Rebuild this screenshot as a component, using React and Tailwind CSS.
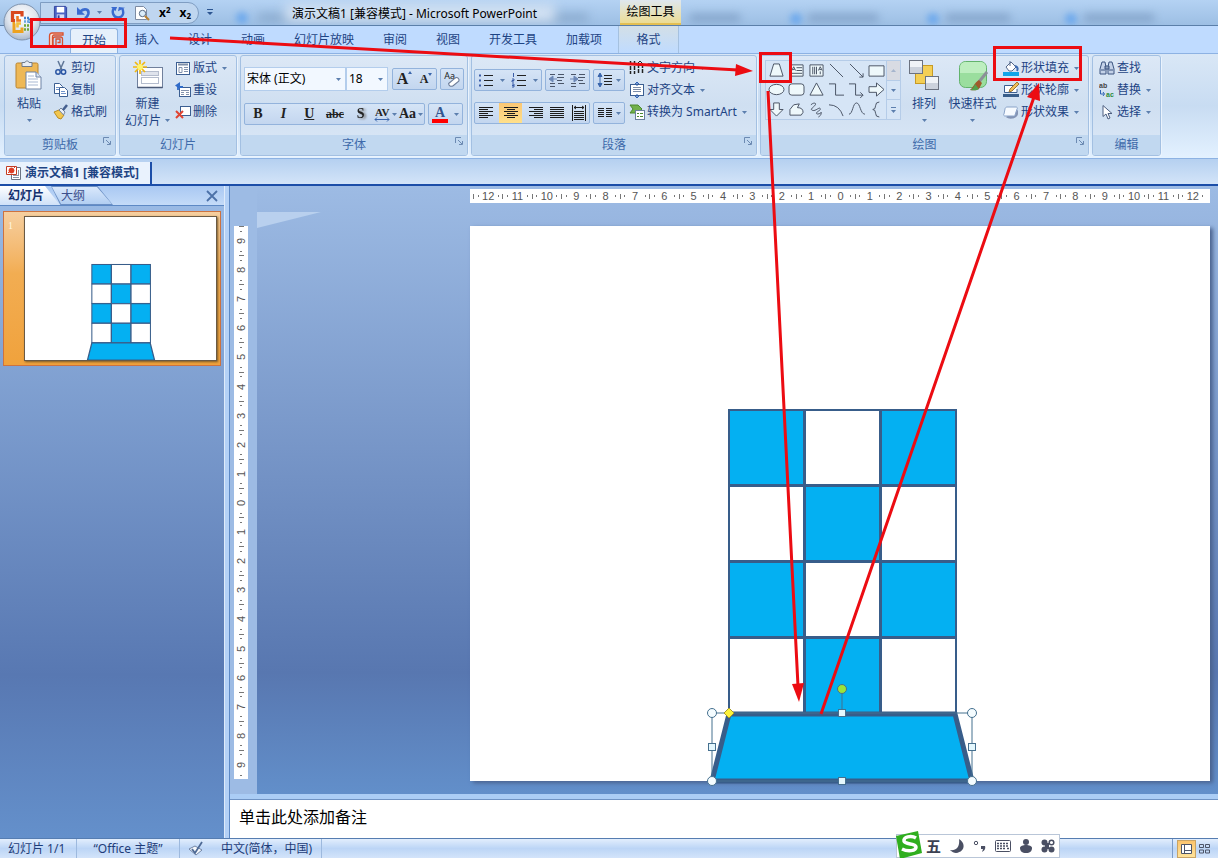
import React, { useState } from 'react';

// Small drop-down triangle used all over the ribbon
const Caret = ({ className = '' }) => (
  <svg className={`w-[5px] h-[3px] flex-shrink-0 ${className}`} viewBox="0 0 5 3" fill="#5c7fae">
    <path d="M0 0h5L2.5 3z" />
  </svg>
);

const Icon = ({ children, className = 'w-4 h-4' }) => (
  <svg className={`flex-shrink-0 ${className}`} viewBox="0 0 16 16" fill="none" stroke="#3c5f92" strokeWidth="1">
    {children}
  </svg>
);

// Orb with the four coloured squares
const OfficeOrb = () => (
  <svg className="w-10 h-10" viewBox="0 0 40 40">
    <defs>
      <radialGradient id="orb" cx="50%" cy="35%" r="65%">
        <stop offset="0" stopColor="#ffffff" />
        <stop offset="0.6" stopColor="#dfe5ee" />
        <stop offset="1" stopColor="#a9b8cc" />
      </radialGradient>
    </defs>
    <circle cx="20" cy="20" r="18" fill="url(#orb)" stroke="#7f93ad" />
    <g fill="none" strokeWidth="2.6">
      <path d="M13 18.500h-2.500v-8H20v4" stroke="#d8481e" strokeWidth="3.200" />
      <path d="M13 21.500h-1v8h8v-4" stroke="#eda21f" strokeWidth="3" />
      <path d="M15.500 14v4.500H19" stroke="#ee7a22" />
      <path d="M22 16h5.500v5" stroke="#3f83cf" strokeDasharray="2 1" />
      <path d="M22 19.500h5" stroke="#6aa5e2" strokeDasharray="2 1" />
      <path d="M22 23.500h5.500M22 27.500h5.500" stroke="#6da83a" strokeDasharray="2 1" />
      <path d="M15.500 25.500V21.500H19" stroke="#f4bf3a" />
    </g>
  </svg>
);

const PptLogo = () => (
  <svg className="w-4 h-4" viewBox="0 0 16 16" fill="none" stroke="#d9502f" strokeWidth="1.3">
    <path d="M4 1h11v2H6c-1 0-1.500 1-1.500 2v9H1.500V4C1.500 2 2.500 1 4 1z" fill="#fbe3da" />
    <rect x="5" y="5" width="9.500" height="9.500" rx="2" />
    <path d="M8 13V7h4v3.500H9.500" />
  </svg>
);

const DocIcon = () => (
  <svg className="w-4 h-4 flex-shrink-0" viewBox="0 0 16 16" fill="#fff" stroke="#6b7484">
    <path d="M5.500 2.500h9v12h-9z" />
    <path d="M7 12.500h6M7 10.500h6M12.500 5v5" stroke="#8a94a5" />
    <path d="M.5 1.500h10v8H.5z" stroke="#c33c22" />
    <circle cx="5.500" cy="5.500" r="2.500" fill="#dd3a22" stroke="#dd3a22" />
    <path d="M2 8l2-2M8 3l1-1" stroke="#dd3a22" />
  </svg>
);

const SaveIcon = () => (
  <Icon className="w-[15px] h-[15px]">
    <path d="M1.500 1.500h12l1 1v12h-13z" fill="#4a63c4" stroke="#2e419c" />
    <path d="M4 2h8v6H4z" fill="#fff" stroke="none" />
    <path d="M4 10h8v4H4z" fill="#d5ddf5" stroke="none" />
    <path d="M6 11v3" stroke="#2e419c" strokeWidth="2" />
  </Icon>
);
const UndoIcon = () => (
  <Icon className="w-[14px] h-[14px]">
    <path d="M4 6c5-4 10-2 9 3-.5 2-2 4-4 5" stroke="#3a6bd0" strokeWidth="3" />
    <path d="M0 1v9h9z" fill="#3a6bd0" stroke="none" />
  </Icon>
);
const RedoIcon = () => (
  <Icon className="w-[14px] h-[14px]">
    <path d="M3 3C1 6 2 13 8 13s7-5 5-10" stroke="#3a6bd0" strokeWidth="2.800" />
    <path d="M8 6l1-5 7 1zM0 1h7L5 6z" fill="#3a6bd0" stroke="none" />
  </Icon>
);
const PreviewIcon = () => (
  <Icon className="w-4 h-4">
    <path d="M1.500 1.500h8l3 3v10h-11z" fill="#fff" stroke="#7d8ba2" />
    <circle cx="8.500" cy="8.500" r="3.200" fill="#dceefb" stroke="#586a84" />
    <path d="M11 11l4 4" stroke="#b98032" strokeWidth="2.200" />
  </Icon>
);

const PasteIcon = () => (
  <svg className="w-8 h-8" viewBox="0 0 32 32">
    <rect x="3" y="4" width="22" height="25" rx="1.500" fill="#eeb856" stroke="#b98430" />
    <path d="M9 3.500h3c0-2 4-2 4 0h3v4H9z" fill="#e8edf3" stroke="#6e7b8d" />
    <path d="M13 13h10l5 5v12H13z" fill="#fff" stroke="#6f83a5" />
    <path d="M23 13v5h5" fill="#dbe5f3" stroke="#6f83a5" />
    <path d="M15 17h6M15 20h10M15 23h10M15 26h10" stroke="#a9b9d3" />
  </svg>
);
const NewSlideIcon = () => (
  <svg className="w-8 h-8" viewBox="0 0 32 32">
    <rect x="5.500" y="8.500" width="25" height="20" fill="#fbfcfe" stroke="#70809c" />
    <rect x="9.500" y="12.500" width="17" height="4" fill="#dfe3ec" stroke="#b4bccd" />
    <rect x="9.500" y="18.500" width="17" height="6" fill="#fff" stroke="#b4bccd" />
    <path d="M5.500 28.500h25" stroke="#4b5a78" strokeWidth="1.500" />
    <path d="M8 1v14M1 8h14M3 3l10 10M13 3L3 13" stroke="#f0b711" strokeWidth="1.700" />
    <circle cx="8" cy="8" r="3" fill="#fff36c" />
  </svg>
);
const CutIcon = () => (
  <Icon>
    <path d="M5 1l4 9M11 1L7 10" stroke="#5f7697" strokeWidth="1.500" />
    <circle cx="5" cy="12" r="2.200" stroke="#2b56a4" strokeWidth="1.500" />
    <circle cx="10.500" cy="12" r="2.200" stroke="#2b56a4" strokeWidth="1.500" />
  </Icon>
);
const CopyIcon = () => (
  <Icon>
    <path d="M1.500 1.500h5l3 3v7h-8z" fill="#fff" />
    <path d="M6.500 5.500h5l3 3v6h-8z" fill="#fff" />
    <path d="M3 5.500h3M3 7.500h3M8 9.500h4M8 11.500h5" stroke="#6f93cb" />
  </Icon>
);
const PainterIcon = () => (
  <Icon>
    <path d="M1 8l5-2 5 5-3 4-3-1z" fill="#f2c64e" stroke="#b98b22" />
    <path d="M6 6l2-2 4 4-1.500 3z" fill="#e8edf5" stroke="#7485a1" />
    <path d="M10 6l4-5" stroke="#445f8f" strokeWidth="2.500" />
  </Icon>
);
const LayoutIcon = () => (
  <Icon>
    <rect x="1.500" y="2.500" width="13" height="12" fill="#fff" />
    <path d="M3 4.500h10" stroke="#7f8fa8" strokeWidth="2" />
    <path d="M4 7.500h3v5H4zM9 7.500h4M9 9.500h4M9 11.500h4" stroke="#8393ad" />
  </Icon>
);
const ResetIcon = () => (
  <Icon>
    <rect x="4.500" y="5.500" width="11" height="9" fill="#fff" />
    <path d="M6 8.500h8M6 10.500h3M11 10.500h3M6 12.500h3M11 12.500h3" stroke="#8393ad" />
    <path d="M3 8V5h5" stroke="#2f6bc9" strokeWidth="1.800" />
    <path d="M5 0v7L0 3.500z" fill="#2f6bc9" stroke="none" />
  </Icon>
);
const DeleteIcon = () => (
  <Icon>
    <rect x="5.500" y="2.500" width="10" height="9" fill="#fff" />
    <path d="M1 7l7 7M8 7l-7 7" stroke="#e04432" strokeWidth="2" />
  </Icon>
);
const ClearIcon = () => (
  <Icon className="w-[18px] h-[18px]">
    <text x="1" y="8" fontSize="8" fill="#222" stroke="none" fontFamily="Noto Sans">Aa</text>
    <path d="M5 12l6-5c2-1 4 1 3 3l-5 4c-2 1-4 0-4-2z" fill="#fff" stroke="#6c7c98" />
  </Icon>
);
const BulletsIcon = () => (
  <Icon>
    <path d="M6 3.500h9M6 8.500h9M6 13.500h9" stroke="#222" />
    <path d="M1 2.500h2v2H1zM1 7.500h2v2H1zM1 12.500h2v2H1z" fill="#3a5da8" stroke="none" />
  </Icon>
);
const NumbersIcon = () => (
  <Icon>
    <path d="M6 3.500h9M6 8.500h9M6 13.500h9" stroke="#222" />
    <path d="M2.500 1v4M1 7h2v1.500H1V10h2M1 12h2v3H1M1 13.500h2" stroke="#3a5da8" />
  </Icon>
);
const IndentIcon = ({ flip }) => (
  <Icon>
    <path d="M1 2.500h5M9 2.500h6M8 5.500h7M8 8.500h5M1 11.500h5M9 11.500h6M1 14.500h5" stroke="#4a5568" />
    <path d={flip ? 'M4 4l4 3-4 3zM0 7h4' : 'M4 4L0 7l4 3zM4 7h4'} fill="#6c87b5" stroke="#6c87b5" />
  </Icon>
);
const SpacingIcon = () => (
  <Icon>
    <path d="M7 3.500h8M7 6.500h8M7 9.500h8M7 12.500h8" stroke="#222" />
    <path d="M3 2v12M1 4.500L3 1l2 3.500zM1 11.500L3 15l2-3.500z" stroke="#3a66ac" fill="#3a66ac" />
  </Icon>
);
const ALIGNS = {
  left: 'M1 2.500h14M1 4.500h9M1 6.500h14M1 8.500h9M1 10.500h14M1 12.500h9',
  center: 'M1 2.500h14M4 4.500h8M1 6.500h14M4 8.500h8M1 10.500h14M4 12.500h8',
  right: 'M1 2.500h14M6 4.500h9M1 6.500h14M6 8.500h9M1 10.500h14M6 12.500h9',
  justify: 'M1 2.500h14M1 4.500h14M1 6.500h14M1 8.500h14M1 10.500h14M1 12.500h14',
  distribute: 'M1.500 0v16M14.500 0v16M3 6.500h10M3 8.500h10M3 10.500h10M3 12.500h10M3 14.500h10M3 2.500h10M5 1L3 2.500 5 4M11 1l2 1.500L11 4',
  columns: 'M1 3.500h6M9 3.500h6M1 5.500h6M9 5.500h6M1 7.500h6M9 7.500h6M1 9.500h6M9 9.500h6M1 11.500h6M9 11.500h6',
};
const AlignIcon = ({ kind }) => (
  <Icon>
    <path d={ALIGNS[kind]} stroke="#1c1c1c" />
  </Icon>
);
const TextDirIcon = () => (
  <Icon>
    <path d="M1.500 1v13M5.500 1v13M9.500 4v10M13.500 4v10" stroke="#222" strokeWidth="1.500" strokeDasharray="4 1" />
    <path d="M8 4l3-3 3 3" stroke="#222" />
  </Icon>
);
const AlignTextIcon = () => (
  <Icon>
    <rect x="1.500" y="2.500" width="13" height="11" fill="#fff" />
    <path d="M4 5.500h8M4 7.500h8M4 9.500h8" stroke="#7b8ca8" />
    <path d="M8 0v4M8 12v4M6 2l2-2 2 2M6 14l2 2 2-2" stroke="#2f62b5" />
  </Icon>
);
const SmartArtIcon = () => (
  <Icon>
    <path d="M1 1h8l4 4-4 4H1l3-4z" fill="#72b04b" stroke="#4c8a2f" />
    <rect x="6.500" y="6.500" width="9" height="9" fill="#fff" stroke="#6b7f9f" />
    <path d="M8 9.500h2M11 9.500h3M8 12.500h2M11 12.500h3" stroke="#4c8a2f" />
  </Icon>
);
const ArrangeIcon = () => (
  <svg className="w-8 h-8" viewBox="0 0 32 32" stroke="#6b7280">
    <rect x="7.500" y="6.500" width="17" height="18" fill="#f4cf55" stroke="#c79a24" />
    <rect x="1.500" y="1.500" width="13" height="13" fill="#ccd2dc" />
    <rect x="17.500" y="17.500" width="13" height="13" fill="#ccd2dc" />
    <path d="M2 2h12v6H2zM18 18h12v6H18z" fill="#f0f3f7" stroke="none" />
  </svg>
);
const QuickStyleIcon = () => (
  <svg className="w-8 h-8" viewBox="0 0 32 32">
    <rect x="2.500" y="2.500" width="27" height="26" rx="6" fill="#9ade9e" stroke="#62b36c" />
    <path d="M3 9c0-4 2-6 6-6h14c4 0 6 2 6 6v5H3z" fill="#bdeebf" />
    <path d="M30 13l-9 11" stroke="#8c9099" strokeWidth="3" />
    <path d="M22 21l3 3-3 6c-3 2-7 1-9 1 3-2 4-7 9-10z" fill="#a05a2b" />
    <path d="M13 31c3-1 4-3 5-6l4 5c-3 2-6 1-9 1z" fill="#52a24c" />
  </svg>
);
const FillIcon = () => (
  <Icon>
    <path d="M3 7l5-5 5 5-4 4H6z" fill="#fff" stroke="#54688a" />
    <path d="M7 1v5" stroke="#54688a" />
    <path d="M12 6c3 1 3 3 2 5" stroke="#3d6bb2" strokeWidth="2" />
    <path d="M0 12h16v4H0z" fill="#10a5e8" stroke="none" />
  </Icon>
);
const OutlineIcon = () => (
  <Icon>
    <path d="M13 3.500H1.500v7H14V7" fill="#fff" />
    <path d="M14 0l2 2-7 7-3 1 1-3z" fill="#f0bf5b" stroke="#9b7434" />
    <path d="M0 12h16v3H0z" fill="#385d8a" stroke="none" />
  </Icon>
);
const EffectIcon = () => (
  <Icon>
    <path d="M3 13c3 3 11 2 12-3V6z" fill="#8494b5" stroke="none" />
    <path d="M4 3h9c1 0 2 1 1 2l-2 6c0 1-1 1-2 1H2c-1 0-2-1-1-2l1-5c0-1 1-2 2-2z" fill="#f6faff" stroke="#8aa3c8" />
  </Icon>
);
const FindIcon = () => (
  <Icon>
    <path d="M3 2h3l1 5v7H1V9zM10 2h3l2 7v5H9V7z" fill="#c4d2e8" stroke="#3c5580" />
    <path d="M6 6h4v3H6zM2 10h4M10 10h4" stroke="#3c5580" />
  </Icon>
);
const ReplaceIcon = () => (
  <svg className="w-4 h-[18px] flex-shrink-0" viewBox="0 0 16 18">
    <text x="0" y="7" fontSize="7" fontWeight="bold" fill="#444" fontFamily="Liberation Sans">ab</text>
    <text x="7" y="16" fontSize="7" fontWeight="bold" fill="#2c8a3a" fontFamily="Liberation Sans">ac</text>
    <path d="M1.500 9v4H5M4 11l1.500 2L4 15" fill="none" stroke="#2f62b5" />
  </svg>
);
const SelectIcon = () => (
  <Icon>
    <path d="M4 1.500v11l3-2.500 2 5 2-1-2-4.500h4z" fill="#fff" stroke="#4d5f80" />
  </Icon>
);

// Shapes gallery, three rows of six
const SHAPES = [
  ['梯形', 'M5 1h6l4 13H1z'],
  ['文本框', 'M1 2h14v12H1zM8 5h6M8 8h6M3 11h11M3 8l2-4 2 4M4 7h2'],
  ['垂直文本框', 'M1 2h14v12H1zM4 4v8M6 4v8M8 4v8M12 9v3M10 8l2-4 2 4M11 7h2'],
  ['直线', 'M1 1l14 14'],
  ['箭头', 'M1 1l14 14M15 11v4h-4'],
  ['矩形', 'M0 3h16v11H0z'],
  ['椭圆', 'M0 8a8 5.500 0 1 0 16 0a8 5.500 0 1 0-16 0'],
  ['圆角矩形', 'M3 2h10q3 0 3 3v6q0 3-3 3H3q-3 0-3-3V5q0-3 3-3z'],
  ['三角形', 'M8 1l7 13H1z'],
  ['肘形连接符', 'M0 2h7v12h9'],
  ['肘形箭头', 'M0 2h7v12h8M12 11l3 3-3 3'],
  ['右箭头', 'M0 5h8V1l8 7-8 7v-4H0z'],
  ['下箭头', 'M5 1h6v7h4l-7 7-7-7h4z'],
  ['任意多边形', 'M1 14V8l4-5 6-1-2 4q6 0 6 5l-2 3z'],
  ['自由曲线', 'M2 3C5 0 9 1 6 4S1 8 4 9s7-4 8-2-4 3-4 5 5 0 5-1 1 3-3 5'],
  ['弧形', 'M0 3q11 0 15 12'],
  ['曲线', 'M0 13C4 13 4 1 8 1s4 12 9 12'],
  ['左大括号', 'M11 0q-4 0-4 4t-3 4q3 0 3 4t4 4'],
];
const FILLED = ['梯形', '文本框', '垂直文本框', '矩形', '椭圆', '圆角矩形', '三角形', '右箭头', '下箭头', '任意多边形'];

const Group = ({ label, launcher, className = '', children }) => (
  <section className={`h-[101px] flex flex-col rounded-[3px] border border-[#a3c0e2] bg-linear-to-b from-[#dce8f6] via-[#cfdff1] to-[#dbe8f7] overflow-hidden shadow-[1px_1px_0_#eaf3fd] ${className}`}>
    <div className="flex-1 flex items-start">{children}</div>
    <div className="h-[20px] flex items-center bg-[#c1d8f0] text-[#3e6aaa] leading-none">
      <span className="flex-1 text-center">{label}</span>
      {launcher && (
        <button aria-label={`${label}设置`} className="w-4 h-4 -ml-4 flex items-start justify-center">
          <svg className="w-2 h-2" viewBox="0 0 8 8" fill="none" stroke="#6c8ab2">
            <path d="M.5 6V.5H6M3 3l4 4M7.500 4v3.500H4" />
          </svg>
        </button>
      )}
    </div>
  </section>
);

const Row = ({ icon, label, caret }) => (
  <button className="h-[22px] flex items-center gap-[2px] text-[#1e4484] whitespace-nowrap">
    {icon}
    <span>{label}</span>
    {caret && <Caret className="ml-[3px]" />}
  </button>
);

const BigButton = ({ icon, label, second, className = '' }) => (
  <button className={`flex flex-col items-center text-[#1e4484] whitespace-nowrap leading-[17px] pt-[3px] ${className}`}>
    {icon}
    <span className="mt-1">{label}</span>
    <span className="flex items-center gap-1 h-[17px]">
      {second}
      <Caret />
    </span>
  </button>
);

const Box = ({ children, className = '' }) => (
  <div className={`h-[22px] flex items-center justify-around rounded-[2px] border border-[#93b3dc] bg-linear-to-b from-[#d5e4f6] to-[#c3d6ef] ${className}`}>
    {children}
  </div>
);

// The tower drawing, in slide coordinates
const Tower = ({ thin }) => {
  const cells = [];
  for (let r = 0; r < 4; r++) {
    for (let c = 0; c < 3; c++) {
      cells.push(
        <rect
          key={`${r}-${c}`}
          x={259 + c * 76}
          y={184 + r * 76}
          width="75"
          height="75"
          fill={(r + c) % 2 === 0 ? '#04b0f2' : '#ffffff'}
        />
      );
    }
  }
  return (
    <g stroke="#385d8a" strokeWidth={thin ? 4 : 2}>
      {cells}
      <path d="M259 488h226l17 67H242z" fill="#04b0f2" strokeWidth="5" />
    </g>
  );
};

const Handles = () => (
  <g stroke="#45708f" fill="#e4f7fd">
    <path d="M242 487h260v68H242zM372 463v24" fill="none" />
    {[[242, 487], [502, 487], [242, 555], [502, 555]].map(([x, y]) => (
      <circle key={`${x}-${y}`} cx={x} cy={y} r="4.500" fill="#f4fcff" />
    ))}
    {[[372, 487], [242, 521], [502, 521], [372, 555]].map(([x, y]) => (
      <rect key={`${x}-${y}`} x={x - 3.5} y={y - 3.5} width="7" height="7" />
    ))}
    <circle cx="372" cy="463" r="4.500" fill="#9be33b" />
    <path d="M259 482l5 5-5 5-5-5z" fill="#fdf23c" stroke="#a69a2e" />
  </g>
);

const HORIZONTAL = Array.from({ length: 25 }, (_, i) => Math.abs(i - 12));
const VERTICAL = Array.from({ length: 19 }, (_, i) => Math.abs(i - 9));

const HorizontalRuler = () => (
  <div className="h-[14px] px-[3px] flex bg-white text-[11px] leading-[14px] text-[#555] font-['Liberation_Sans']">
    {HORIZONTAL.map((n, i) => (
      <div key={i} className="flex-1 flex items-center justify-between">
        <span className="w-px h-[5px] bg-[#777]" />
        <span className="w-px h-[2px] bg-[#777]" />
        <span className="w-3 flex justify-center">{n}</span>
        <span className="w-px h-[2px] bg-[#777]" />
        <span />
      </div>
    ))}
  </div>
);

const VerticalRuler = () => (
  <div className="w-[14px] flex-1 flex flex-col bg-white text-[11px] leading-none text-[#555] font-['Liberation_Sans']">
    {VERTICAL.map((n, i) => (
      <div key={i} className="flex-1 flex flex-col items-center justify-between">
        <span className="h-px w-[5px] bg-[#777]" />
        <span className="h-px w-[2px] bg-[#777]" />
        <span className="h-3 flex items-center -rotate-90">{n}</span>
        <span className="h-px w-[2px] bg-[#777]" />
        <span />
      </div>
    ))}
  </div>
);

const TABS = ['插入', '设计', '动画', '幻灯片放映', '审阅', '视图', '开发工具', '加载项'];

const TitleBar = () => (
  <header className="relative h-[26px] flex items-center bg-linear-to-b from-[#b4d2f3] to-[#9dbfe4] border-b border-[#5b7fa9] text-black">
    {/* Glass showing the window behind */}
    <div className="absolute inset-0 overflow-hidden">
      <div className="absolute left-[236px] top-[12px] w-3 h-3 rounded-full bg-[#6ea9ec] blur-[3px]" />
      <div className="absolute left-[258px] top-[13px] w-[330px] h-[10px] bg-[#8eaed2] blur-[5px]" />
      <div className="absolute left-[285px] top-[4px] w-[270px] h-[18px] bg-[#d3e2f3] blur-[6px]" />
      <div className="absolute left-[690px] top-[14px] w-[50px] h-[8px] bg-[#84a4ca] blur-[4px]" />
      <div className="absolute left-[790px] top-[13px] w-3 h-3 rounded-full bg-[#6ea9ec] blur-[3px]" />
      <div className="absolute left-[808px] top-[14px] w-[70px] h-[8px] bg-[#84a4ca] blur-[4px]" />
      <div className="absolute left-[927px] top-[13px] w-3 h-3 rounded-full bg-[#6ea9ec] blur-[3px]" />
      <div className="absolute left-[946px] top-[14px] w-[64px] h-[8px] bg-[#84a4ca] blur-[4px]" />
      <div className="absolute left-[1065px] top-[13px] w-3 h-3 rounded-full bg-[#6ea9ec] blur-[3px]" />
      <div className="absolute left-[1084px] top-[14px] w-[70px] h-[8px] bg-[#84a4ca] blur-[4px]" />
    </div>
    <div className="relative ml-10 w-[159px] h-[22px] pl-3 flex items-center gap-[9px] rounded-r-full border border-[#7f9dc2] bg-[#bfd6f0]">
      <button aria-label="保存"><SaveIcon /></button>
      <button aria-label="撤消" className="flex items-center gap-[6px]"><UndoIcon /><Caret /></button>
      <button aria-label="恢复"><RedoIcon /></button>
      <button aria-label="打印预览"><PreviewIcon /></button>
      <button className="font-bold text-[12px] leading-none">x<sup className="text-[8px]">2</sup></button>
      <button className="font-bold text-[12px] leading-none">x<sub className="text-[8px]">2</sub></button>
    </div>
    <button aria-label="自定义快速访问工具栏" className="relative ml-2">
      <svg className="w-[6px] h-[7px]" viewBox="0 0 6 7" fill="#2c5591"><path d="M0 0h6v1H0zM0 3h6L3 6z" /></svg>
    </button>
    <h1 className="relative ml-[79px] w-[328px] whitespace-nowrap text-[12px] pt-[2px]">演示文稿1 [兼容模式] - Microsoft PowerPoint</h1>
    <div className="relative w-[61px] h-full text-center leading-6 bg-linear-to-b from-[#dfe7ee] to-[#ecdc93] border-b-2 border-[#e3bf52]">绘图工具</div>
    <button aria-label="Office 按钮" className="absolute left-[2px] top-[2px] z-10"><OfficeOrb /></button>
  </header>
);

const TabBar = () => {
  const [active, setActive] = useState('开始');
  return (
    <nav className="h-[27px] pl-[48px] flex items-stretch bg-[#bfdbff] text-[#1e4484]">
      <span className="flex items-center w-[22px]"><PptLogo /></span>
      <button onClick={() => setActive('开始')} className="w-[48px] mt-[2px] rounded-t-[3px] border border-b-0 border-[#8fb3e0] bg-[#e6f0fb]">开始</button>
      <div className="ml-[17px] flex gap-[29px]">
        {TABS.map((t) => (
          <button key={t} onClick={() => setActive(t)} aria-pressed={active === t} className="whitespace-nowrap">{t}</button>
        ))}
      </div>
      <button className="ml-[16px] w-[61px] border-x border-[#a5c1e0] bg-linear-to-b from-[#d3dfe6] to-[#bfdbff]">格式</button>
    </nav>
  );
};

const Ribbon = () => (
  <div className="h-[106px] pt-px px-1 flex gap-[3px] bg-linear-to-b from-[#d9e7f6] via-[#c8dcf2] to-[#e3f1ff] border-y border-[#8db2e3]">
    <Group label="剪贴板" launcher className="w-[112px]">
      <BigButton className="w-[48px]" icon={<PasteIcon />} label="粘贴" />
      <div className="flex flex-col items-start pt-px">
        <Row icon={<CutIcon />} label="剪切" />
        <Row icon={<CopyIcon />} label="复制" />
        <Row icon={<PainterIcon />} label="格式刷" />
      </div>
    </Group>
    <Group label="幻灯片" className="w-[118px]">
      <BigButton className="w-[55px]" icon={<NewSlideIcon />} label="新建" second="幻灯片" />
      <div className="flex flex-col items-start pt-px">
        <Row icon={<LayoutIcon />} label="版式" caret />
        <Row icon={<ResetIcon />} label="重设" />
        <Row icon={<DeleteIcon />} label="删除" />
      </div>
    </Group>
    <Group label="字体" launcher className="w-[228px]">
      <div className="flex flex-col gap-3 pl-[3px] pt-[11px]">
        <div className="flex items-center">
          <label className="relative flex items-center">
            <select aria-label="字体" className="appearance-none w-[102px] h-6 px-[2px] bg-[#f2f8ff] border border-[#b3cdec] text-black">
              <option>宋体 (正文)</option>
            </select>
            <Caret className="absolute right-[5px]" />
          </label>
          <label className="relative flex items-center">
            <select aria-label="字号" className="appearance-none w-[42px] h-6 px-[2px] bg-[#f2f8ff] border border-[#b3cdec] text-black">
              <option>18</option>
            </select>
            <Caret className="absolute right-[5px]" />
          </label>
          <Box className="w-[45px] ml-1 font-['Liberation_Serif'] font-bold text-[#222]">
            <button className="text-[16px] leading-none flex">A<svg className="w-1 h-1" viewBox="0 0 4 4" fill="#3a66ac"><path d="M0 3l2-3 2 3z" /></svg></button>
            <button className="text-[12px] leading-none flex">A<svg className="w-1 h-1" viewBox="0 0 4 4" fill="#3a66ac"><path d="M0 0h4L2 3z" /></svg></button>
          </Box>
          <Box className="w-6 ml-[3px]"><button aria-label="清除格式"><ClearIcon /></button></Box>
        </div>
        <div className="flex gap-[3px]">
          <Box className="w-[181px] font-['Liberation_Serif'] text-[14px] font-bold leading-none text-[#222]">
            <button className="w-6">B</button>
            <button className="w-6 italic">I</button>
            <button className="w-6 underline">U</button>
            <button className="w-6 line-through text-[12px]">abc</button>
            <button className="w-6 drop-shadow-[2px_1px_1px_#777]">S</button>
            <button className="flex items-center gap-[2px]">
              <span className="flex flex-col items-center text-[11px] leading-[10px]">
                AV
                <svg className="w-4 h-[5px]" viewBox="0 0 16 5" fill="none" stroke="#3a66ac"><path d="M1 2.500h14M3 .5l-2 2 2 2M13 .5l2 2-2 2" /></svg>
              </span>
              <Caret />
            </button>
            <button className="flex items-center gap-[2px]">Aa<Caret /></button>
          </Box>
          <Box className="w-[35px]">
            <button className="flex items-center gap-[6px]">
              <span className="w-4 border-b-4 border-[#ff0000] font-['Liberation_Serif'] text-[14px] leading-[13px] font-bold text-[#34568f]">A</span>
              <Caret />
            </button>
          </Box>
        </div>
      </div>
    </Group>
    <Group label="段落" launcher className="w-[286px]">
      <div className="w-[153px] flex flex-col gap-[11px] pl-[2px] pt-[13px]">
        <div className="flex gap-[3px]">
          <Box className="w-[68px]">
            <button className="flex items-center gap-[6px]"><BulletsIcon /><Caret /></button>
            <button className="flex items-center gap-[6px]"><NumbersIcon /><Caret /></button>
          </Box>
          <Box className="w-[45px]">
            <button aria-label="减少缩进"><IndentIcon /></button>
            <button aria-label="增加缩进"><IndentIcon flip /></button>
          </Box>
          <Box className="w-8"><button className="flex items-center gap-[3px]"><SpacingIcon /><Caret /></button></Box>
        </div>
        <div className="flex gap-[3px]">
          <Box className="w-[118px]">
            <button aria-label="左对齐"><AlignIcon kind="left" /></button>
            <button aria-label="居中" className="h-5 w-[23px] flex items-center justify-center bg-linear-to-b from-[#fbc774] to-[#ffe08a]"><AlignIcon kind="center" /></button>
            <button aria-label="右对齐"><AlignIcon kind="right" /></button>
            <button aria-label="两端对齐"><AlignIcon kind="justify" /></button>
            <button aria-label="分散对齐"><AlignIcon kind="distribute" /></button>
          </Box>
          <Box className="w-8"><button className="flex items-center gap-[3px]"><AlignIcon kind="columns" /><Caret /></button></Box>
        </div>
      </div>
      <div className="pl-1 flex flex-col items-start pt-px">
        <Row icon={<TextDirIcon />} label="文字方向" caret />
        <Row icon={<AlignTextIcon />} label="对齐文本" caret />
        <Row icon={<SmartArtIcon />} label="转换为 SmartArt" caret />
      </div>
    </Group>
    <Group label="绘图" launcher className="w-[329px]">
      <div className="ml-1 mt-1 h-[60px] flex border border-[#b5cce8] bg-[#d6e5f6]">
        <div className="grid grid-cols-6">
          {SHAPES.map(([name, d]) => (
            <button key={name} aria-label={name} className="w-5 h-[19px] flex items-center justify-center">
              <svg className="w-[15px] h-[15px] overflow-visible" viewBox="0 0 16 16" fill={FILLED.includes(name) ? '#eef8fb' : 'none'} stroke="#454f60" strokeWidth="1">
                <path d={d} />
              </svg>
            </button>
          ))}
        </div>
        <div className="w-[14px] flex flex-col border-l border-[#b5cce8]">
          <button aria-label="上一行" className="flex-1 flex items-center justify-center bg-[#d8dbe3]"><Caret className="rotate-180 opacity-40" /></button>
          <button aria-label="下一行" className="flex-1 flex items-center justify-center border-y border-[#b5cce8]"><Caret /></button>
          <button aria-label="其他" className="flex-1 flex flex-col items-center justify-center gap-[2px]"><span className="w-[5px] h-px bg-[#5c7fae]" /><Caret /></button>
        </div>
      </div>
      <BigButton className="w-[46px]" icon={<ArrangeIcon />} label="排列" />
      <BigButton className="w-[51px]" icon={<QuickStyleIcon />} label="快速样式" />
      <div className="ml-[5px] flex flex-col items-start pt-px">
        <Row icon={<FillIcon />} label="形状填充" caret />
        <Row icon={<OutlineIcon />} label="形状轮廓" caret />
        <Row icon={<EffectIcon />} label="形状效果" caret />
      </div>
    </Group>
    <Group label="编辑" className="w-[69px]">
      <div className="pl-[6px] flex flex-col items-start pt-px">
        <Row icon={<FindIcon />} label="查找" />
        <Row icon={<ReplaceIcon />} label="替换" caret />
        <Row icon={<SelectIcon />} label="选择" caret />
      </div>
    </Group>
  </div>
);

const SlidesPane = () => (
  <aside className="w-[224px] flex-shrink-0 bg-linear-to-b from-[#9cbce6] via-[#5878b2] via-75% to-[#6490cb]">
    <div className="h-5 flex items-stretch bg-linear-to-b from-[#a9c8f2] to-[#c4dbf8] border-b border-[#5d89c5]">
      <button className="w-[60px] pl-2 text-left font-bold text-[#14306e] bg-linear-to-b from-white to-[#cfe1f8] [clip-path:polygon(0_0,75%_0,100%_100%,0_100%)]">幻灯片</button>
      <button className="w-[62px] -ml-[9px] bg-[#6b8fc4] p-px [clip-path:polygon(0_0,75%_0,100%_100%,15%_100%)]">
        <span className="flex items-center w-full h-full pl-[9px] text-[#3c4f8c] bg-linear-to-b from-[#d9e8fb] to-[#b2cef2] [clip-path:polygon(0_0,75%_0,100%_100%,15%_100%)]">大纲</span>
      </button>
      <button aria-label="关闭" className="ml-auto mr-[6px] flex items-center">
        <svg className="w-3 h-3" viewBox="0 0 12 12" stroke="#4c71a8" strokeWidth="1.800"><path d="M1 1l10 10M11 1L1 11" /></svg>
      </button>
    </div>
    <div className="mx-[3px] mt-[5px] pt-1 pb-1 pr-[3px] flex border border-[#cd7340] bg-linear-to-b from-[#f6cf9f] via-[#f2ad52] via-40% to-[#f0a23c]">
      <span className="w-[20px] pl-1 pt-1 text-[10px] leading-3 font-['Liberation_Serif'] text-[#fff6e0]">1</span>
      <svg className="flex-1 bg-white border border-[#6a5a45] shadow-[1px_1px_2px_#7a5a28]" viewBox="0 0 740 555">
        <Tower thin />
      </svg>
    </div>
  </aside>
);

const Workspace = () => (
  <main className="flex-1 min-w-0 flex flex-col border-l border-[#5d89c5]">
    <div className="flex-1 flex">
      <div className="w-[27px] flex-shrink-0 flex flex-col pl-1 pt-10 pb-[15px] bg-[#9dbbe4]">
        <VerticalRuler />
      </div>
      <div className="relative flex-1 pl-[213px] pt-[3px] pr-2 bg-linear-to-b from-[#9dbbe4] via-[#5877b0] via-80% to-[#628fca]">
        <svg className="absolute left-0 top-[26px] w-16 h-4" viewBox="0 0 64 16"><path d="M0 0h64L0 16z" fill="#b9d0ee" /></svg>
        <HorizontalRuler />
        <svg className="block mt-[23px] w-full bg-white overflow-visible shadow-[3px_2px_4px_#4b638f]" viewBox="0 0 740 555">
          <Tower />
          <Handles />
        </svg>
      </div>
    </div>
    <div className="h-[6px] bg-[#abcdf5] border-b border-[#6f93c4]" />
    <textarea aria-label="备注" defaultValue="单击此处添加备注" className="h-[38px] resize-none px-[9px] py-1 bg-white text-black text-[16px] leading-6 outline-none font-['Noto_Sans_CJK_SC']" />
  </main>
);

// Floating input-method bar
const ImeBar = () => (
  <div className="absolute right-[158px] bottom-0 h-6 flex items-center gap-[9px] pr-1 pl-[29px] bg-white border border-[#b9c6d8] text-[#3c4152]">
    <svg className="absolute -left-1 -top-1 w-8 h-7" viewBox="0 0 32 28">
      <path d="M3 5L25 0l4 22-22 6z" fill="#2fae1f" />
      <path d="M23 7c-5-3-13-1-12 3s12 2 12 6-8 5-14 2" fill="none" stroke="#fff" strokeWidth="3.500" />
    </svg>
    <button className="text-[15px] leading-none font-bold">五</button>
    <svg className="w-[14px] h-[14px]" viewBox="0 0 14 14" fill="#4a4f63"><path d="M9 0c7 4 6 13-3 14-2 0-4-1-6-3C7 12 10 7 9 0z" /></svg>
    <svg className="w-[13px] h-[14px]" viewBox="0 0 13 14"><circle cx="3" cy="4" r="1.700" fill="none" stroke="#4a4f63" /><path d="M8 7h4c1 3-1 5-3 6l1-3H8z" fill="#4a4f63" /></svg>
    <svg className="w-4 h-3" viewBox="0 0 16 12"><rect x=".5" y=".5" width="15" height="11" rx="1" fill="#fff" stroke="#4a4f63" /><path d="M2 3.500h12M2 6h12M2 8.500h2M5 8.500h6M12 8.500h2" stroke="#4a4f63" strokeWidth="1.500" strokeDasharray="2 1" /></svg>
    <svg className="w-3 h-[14px]" viewBox="0 0 12 14" fill="#4a4f63"><circle cx="6" cy="3" r="3" /><path d="M0 9c0-4 12-4 12 0 0 3-2 5-6 5S0 12 0 9z" /></svg>
    <svg className="w-[14px] h-[14px]" viewBox="0 0 14 14" fill="#4a4f63"><circle cx="3.500" cy="3.500" r="3" /><circle cx="10.500" cy="3.500" r="2.300" fill="none" stroke="#4a4f63" strokeWidth="1.500" /><circle cx="3.500" cy="10.500" r="3" /><circle cx="10.500" cy="10.500" r="3" /><path d="M4 4h4v6H4z" /></svg>
  </div>
);

const StatusBar = () => (
  <footer className="relative h-5 flex items-stretch border-t border-[#567db1] bg-linear-to-b from-[#e2eefd] via-[#bcd5f6] to-[#d3e4fa] text-[#1e3c78] leading-[19px]">
    <span className="w-[77px] pl-2 border-r border-[#9db9de]">幻灯片 1/1</span>
    <span className="w-[103px] text-center border-r border-[#9db9de]">“Office 主题”</span>
    <span className="w-[41px] flex items-center pl-2">
      <svg className="w-4 h-4" viewBox="0 0 16 16"><path d="M1 8l6-3 7 4-6 5z" fill="#f4f7fb" stroke="#7084a5" /><path d="M4 8l3 4 7-11" fill="none" stroke="#4e6a96" strokeWidth="1.800" /></svg>
    </span>
    <span className="w-[101px] border-r border-[#9db9de]">中文(简体，中国)</span>
    <div className="ml-auto w-[46px] flex items-center gap-[3px] pl-1 border-l border-[#7c9cc8]">
      <button aria-label="普通视图" className="w-[19px] h-[18px] flex items-center justify-center bg-linear-to-b from-[#fbc46d] to-[#ffe39a] border border-[#c9a465]">
        <svg className="w-[11px] h-[10px]" viewBox="0 0 11 10" fill="#fff" stroke="#4d5568"><path d="M.5.5h10v9H.5zM3.500.5v9M3.500 6.500h7" /></svg>
      </button>
      <button aria-label="幻灯片浏览">
        <svg className="w-[11px] h-[10px]" viewBox="0 0 11 10" fill="none" stroke="#4d5568"><path d="M.5.5h4v3h-4zM6.500.5h4v3h-4zM.5 6h4v3h-4zM6.500 6h4v3h-4z" /></svg>
      </button>
    </div>
    <ImeBar />
  </footer>
);

// Red tutorial marks drawn on top of the window
const Annotations = () => (
  <svg className="absolute left-0 top-0 z-20 pointer-events-none w-[1218px] h-[858px]" viewBox="0 0 1218 858" fill="none" stroke="#ec0c12" strokeWidth="3">
    <path d="M31.500 19.500h94v27h-94zM760.500 53.500h30v28h-30zM994.500 47.500h86v32h-86z" />
    <path d="M170 38L738 70M768 91L798 686M821 714L1034 97" />
    <g fill="#ec0c12" stroke="none">
      <path d="M753 71l-18 5 1-12z" />
      <path d="M799 702l-7-18 12-1z" />
      <path d="M1039 83l1 18-13-4z" />
    </g>
  </svg>
);

export default function App() {
  return (
    <div className="relative w-full h-screen flex flex-col overflow-hidden text-[12px] leading-4 bg-[#bfdbff] font-['Noto_Sans','Noto_Sans_CJK_SC',sans-serif]">
      <TitleBar />
      <TabBar />
      <Ribbon />
      <div className="h-[27px] pt-[3px] flex bg-linear-to-b from-[#b5d0f0] to-[#d3e4f8] border-b-2 border-[#1c4ea8]">
        <button className="w-[152px] pl-[6px] flex items-center gap-[3px] bg-[#e9f2fd] border-r-2 border-[#1c4ea8] font-bold text-[#1e4484] whitespace-nowrap">
          <DocIcon />
          演示文稿1 [兼容模式]
        </button>
      </div>
      <div className="flex-1 min-h-0 flex">
        <SlidesPane />
        <div className="w-[5px] bg-[#b4d1f6] border-l border-[#dfebfa]" />
        <Workspace />
      </div>
      <StatusBar />
      <Annotations />
    </div>
  );
}
